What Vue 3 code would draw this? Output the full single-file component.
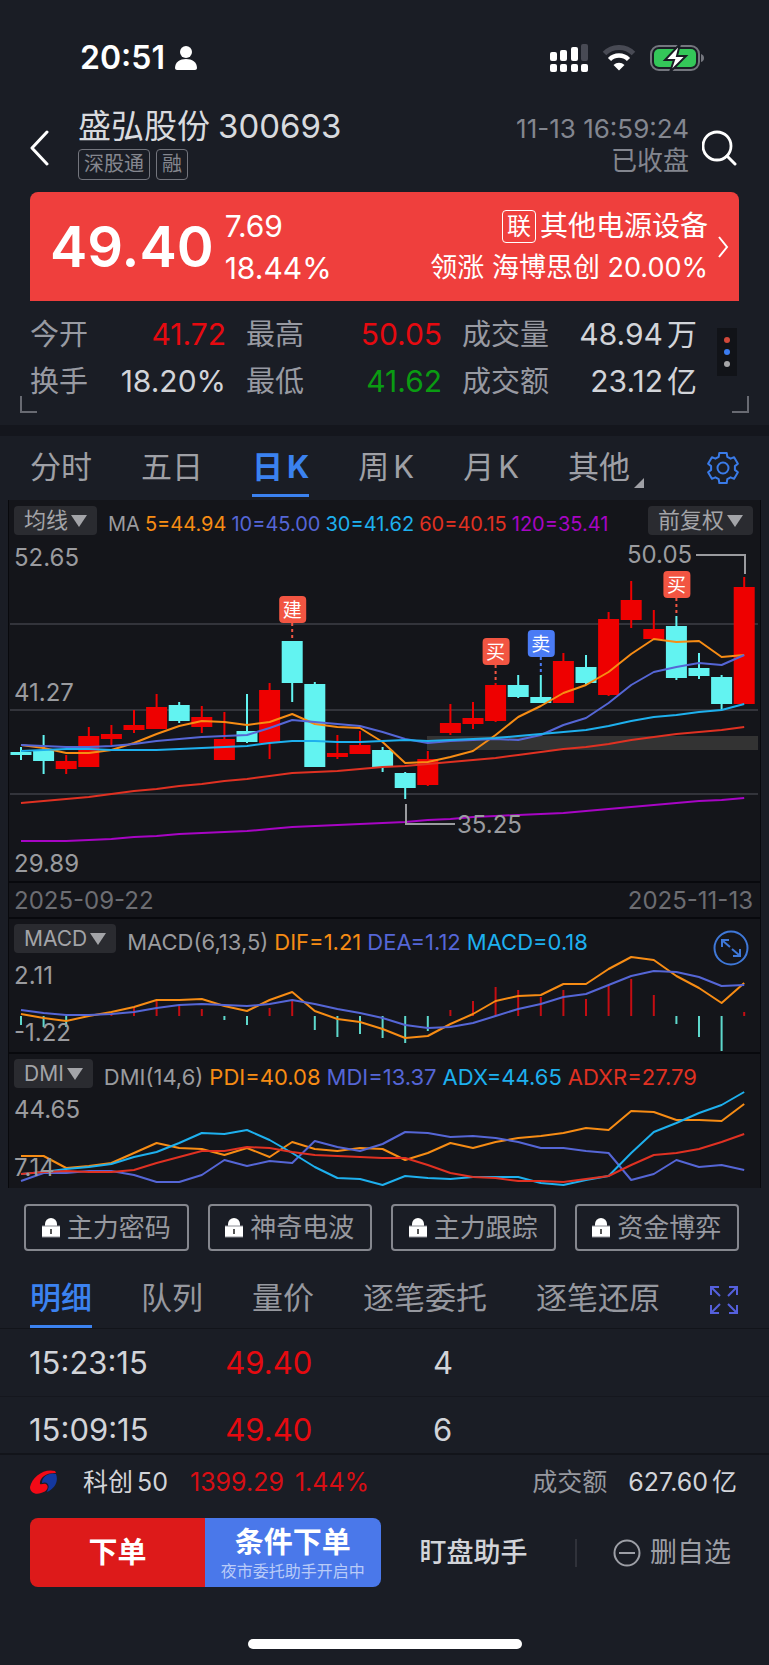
<script setup>
import { ref } from 'vue'

const stats = [
  { label: '今开', value: '41.72', tone: 'up' },
  { label: '最高', value: '50.05', tone: 'up' },
  { label: '成交量', value: '48.94', unit: '万' },
  { label: '换手', value: '18.20%' },
  { label: '最低', value: '41.62', tone: 'down' },
  { label: '成交额', value: '23.12', unit: '亿' }
]

const periods = [
  { id: 'min', text: '分时' },
  { id: 'five', text: '五日' },
  { id: 'day', text: '日', latin: 'K' },
  { id: 'week', text: '周', latin: 'K' },
  { id: 'month', text: '月', latin: 'K' },
  { id: 'other', text: '其他', more: true }
]
const period = ref('day')

const maLegend = [
  { text: 'MA', tone: 'plain' },
  { text: '5=44.94', tone: 'orange' },
  { text: '10=45.00', tone: 'indigo' },
  { text: '30=41.62', tone: 'cyan' },
  { text: '60=40.15', tone: 'red' },
  { text: '120=35.41', tone: 'purple' }
]
const macdLegend = [
  { text: 'MACD(6,13,5)', tone: 'plain' },
  { text: 'DIF=1.21', tone: 'orange' },
  { text: 'DEA=1.12', tone: 'indigo' },
  { text: 'MACD=0.18', tone: 'cyan' }
]
const dmiLegend = [
  { text: 'DMI(14,6)', tone: 'plain' },
  { text: 'PDI=40.08', tone: 'orange' },
  { text: 'MDI=13.37', tone: 'indigo' },
  { text: 'ADX=44.65', tone: 'cyan' },
  { text: 'ADXR=27.79', tone: 'red' }
]

// one trading day per 22.6 chart units
const dayX = (i) => 12 + i * 22.6

const toPoints = (ys) => ys.map((y, i) => `${dayX(i).toFixed(1)},${y}`).join(' ')

// wick top, body top, body bottom, wick bottom, rising
const candles = [
  [207, 212, 215, 220, 0], [195, 210, 221, 234, 0], [215, 221, 229, 234, 1],
  [187, 196, 227, 227, 1], [185, 194, 199, 205, 1], [170, 185, 190, 193, 1],
  [154, 167, 189, 189, 1], [162, 165, 181, 183, 0], [166, 177, 187, 193, 1],
  [172, 199, 220, 220, 1], [154, 191, 202, 203, 0], [143, 150, 203, 219, 1],
  [101, 101, 143, 162, 0], [142, 144, 227, 227, 0], [195, 213, 217, 219, 1],
  [191, 205, 214, 214, 1], [207, 210, 227, 232, 0], [232, 233, 248, 259, 0],
  [211, 219, 245, 246, 1], [164, 183, 193, 195, 1], [162, 178, 184, 189, 1],
  [143, 145, 181, 182, 1], [135, 145, 157, 158, 0], [135, 157, 163, 163, 0],
  [113, 121, 163, 163, 1], [115, 127, 143, 145, 0], [72, 79, 155, 156, 1],
  [41, 60, 80, 88, 1], [70, 89, 99, 99, 1], [76, 86, 138, 140, 0],
  [113, 128, 136, 139, 0], [135, 137, 164, 170, 0], [37, 47, 164, 164, 1]
]

const maLines = [
  {
    tone: 'purple',
    ys: [301, 301, 301, 300, 299, 297, 296, 294, 293, 292, 291, 289, 287, 286, 285, 284, 283, 282, 280, 279, 277, 276, 275, 274, 273, 271, 269, 267, 265, 263, 261, 260, 258]
  },
  {
    tone: 'orange',
    ys: [205, 208, 213, 213, 210, 203, 194, 186, 181, 182, 185, 182, 174, 184, 187, 188, 202, 223, 222, 217, 211, 195, 177, 166, 153, 145, 132, 114, 99, 102, 101, 117, 115]
  },
  {
    tone: 'indigo',
    ys: [205, 206, 207, 207, 206, 204, 201, 199, 197, 196, 195, 188, 180, 182, 184, 186, 192, 199, 203, 201, 200, 199, 200, 195, 185, 178, 163, 145, 132, 127, 123, 125, 115]
  },
  {
    tone: 'cyan',
    ys: [211, 210, 209, 209, 210, 210, 210, 209, 208, 207, 206, 203, 201, 201, 202, 202, 201, 200, 201, 200, 199, 198, 196, 194, 192, 190, 186, 181, 177, 175, 172, 170, 164]
  },
  {
    tone: 'red',
    ys: [263, 261, 259, 257, 254, 251, 249, 246, 244, 241, 239, 236, 233, 232, 231, 229, 227, 226, 224, 222, 220, 218, 215, 212, 209, 207, 204, 200, 197, 194, 192, 190, 187]
  }
]

const trades = [
  { day: 12, y: 56, end: 99, text: '建', kind: 'buy' },
  { day: 21, y: 98, end: 143, text: '买', kind: 'buy' },
  { day: 23, y: 90, end: 134, text: '卖', kind: 'sell' },
  { day: 29, y: 31, end: 75, text: '买', kind: 'buy' }
]

const macdZero = 99
const macdBars = [108, 110, 110, 99, 97, 90, 84, 89, 92, 103, 108, 91, 84, 113, 120, 117, 121, 126, 114, 93, 84, 70, 73, 80, 73, 82, 68, 62, 78, 107, 120, 134, 95]
const macdLines = [
  {
    tone: 'orange',
    ys: [97, 101, 104, 99, 95, 90, 83, 83, 82, 89, 94, 83, 75, 94, 102, 105, 112, 121, 119, 107, 97, 84, 79, 78, 67, 67, 52, 40, 43, 59, 71, 86, 66]
  },
  {
    tone: 'indigo',
    ys: [93, 96, 98, 98, 97, 95, 91, 88, 87, 88, 89, 87, 83, 87, 92, 96, 101, 108, 111, 110, 106, 99, 92, 87, 80, 77, 68, 59, 54, 55, 60, 69, 68]
  }
]

const dmiLines = [
  {
    tone: 'orange',
    ys: [104, 104, 116, 114, 111, 101, 91, 96, 97, 103, 96, 105, 90, 97, 99, 96, 97, 108, 101, 91, 96, 90, 86, 84, 81, 76, 78, 59, 60, 68, 68, 69, 52]
  },
  {
    tone: 'indigo',
    ys: [129, 121, 121, 119, 119, 123, 130, 130, 123, 108, 114, 109, 111, 89, 95, 99, 92, 80, 81, 85, 84, 86, 90, 96, 96, 99, 101, 128, 122, 108, 115, 113, 118]
  },
  {
    tone: 'cyan',
    ys: [122, 120, 117, 115, 112, 105, 100, 91, 81, 82, 78, 88, 101, 115, 126, 127, 133, 124, 126, 127, 125, 125, 125, 131, 133, 128, 124, 101, 80, 71, 61, 53, 40]
  },
  {
    tone: 'red',
    ys: [122, 120, 119, 120, 120, 118, 111, 105, 99, 99, 95, 96, 100, 103, 104, 105, 106, 106, 113, 121, 125, 126, 129, 129, 130, 127, 124, 113, 103, 101, 97, 90, 82]
  }
]

const locked = ['主力密码', '神奇电波', '主力跟踪', '资金博弈']

const detailTabs = ['明细', '队列', '量价', '逐笔委托', '逐笔还原']
const detailTab = ref('明细')

const ticks = [
  { time: '15:23:15', price: '49.40', qty: 4 },
  { time: '15:09:15', price: '49.40', qty: 6 }
]

// six-toothed outline for the settings button
const gear = (() => {
  const at = (deg, r) => {
    const a = (deg * Math.PI) / 180
    return `${(17 + r * Math.cos(a)).toFixed(1)} ${(17 + r * Math.sin(a)).toFixed(1)}`
  }
  const points = []
  for (let t = -90; t < 270; t += 60) {
    points.push(at(t - 21, 12), at(t - 14, 15.5), at(t + 14, 15.5), at(t + 21, 12))
  }
  return `M${points.join('L')}Z`
})()
</script>

<template>
  <div class="page">
    <div class="status">
      <span class="clock">20:51</span>
      <svg class="person" viewBox="0 0 24 24" width="24" height="24">
        <circle cx="12" cy="6" r="6" fill="#fff" />
        <path d="M1 22c0-6 5-9 11-9s11 3 11 9c0 1-1 2-2 2H3c-1 0-2-1-2-2z" fill="#fff" />
      </svg>
      <div class="status-icons">
        <svg viewBox="0 0 38 28" width="38" height="28" fill="#fff">
          <rect x="0" y="8" width="7" height="9" rx="2" />
          <rect x="10" y="6" width="7" height="11" rx="2" />
          <rect x="21" y="3" width="7" height="14" rx="2" />
          <rect x="31" y="0" width="7" height="17" rx="2" fill="#484a54" />
          <rect x="0" y="20" width="7" height="8" rx="2" />
          <rect x="10" y="20" width="7" height="8" rx="2" />
          <rect x="21" y="20" width="7" height="8" rx="2" />
          <rect x="31" y="20" width="7" height="8" rx="2" />
        </svg>
        <svg viewBox="0 0 34 26" width="34" height="26" fill="none">
          <path d="M2.500 8.500a20.500 20.500 0 0 1 29 0" stroke="#484a54" stroke-width="5" />
          <path d="M7.500 14.500a13.500 13.500 0 0 1 19 0" stroke="#fff" stroke-width="4.500" />
          <path d="M11.500 20a8 8 0 0 1 11 0L17 25.500z" fill="#fff" />
        </svg>
        <svg viewBox="0 0 54 28" width="54" height="28">
          <rect x="1" y="2" width="48" height="24" rx="8" fill="none" stroke="#74767e" stroke-width="2" />
          <path d="M51 10q3 1 3 4t-3 4z" fill="#74767e" />
          <rect x="4" y="5" width="42" height="18" rx="5" fill="#34c759" />
          <path d="M30 0L15 16h9l-4 12 16-16h-9z" fill="#fff" stroke="#1a1d25" stroke-width="2" />
        </svg>
      </div>
    </div>

    <header class="header">
      <button class="icon-btn" aria-label="返回">
        <svg viewBox="0 0 20 36" width="20" height="36">
          <path d="M18 2L3 18l15 16" fill="none" stroke="#fff" stroke-width="3" stroke-linecap="round" stroke-linejoin="round" />
        </svg>
      </button>
      <div class="name-box">
        <h1 class="name"><span>盛弘股份</span> <span>300693</span></h1>
        <div class="tags">
          <span class="tag">深股通</span>
          <span class="tag">融</span>
        </div>
      </div>
      <div class="market-time">
        <div>11-13 16:59:24</div>
        <div>已收盘</div>
      </div>
      <button class="icon-btn" aria-label="搜索">
        <svg viewBox="0 0 38 36" width="38" height="36">
          <circle cx="15" cy="16" r="14" fill="none" stroke="#fff" stroke-width="2.800" />
          <path d="M25 26l8 8" stroke="#fff" stroke-width="3" stroke-linecap="round" />
        </svg>
      </button>
    </header>

    <section class="quote">
      <strong class="price">49.40</strong>
      <div class="change">
        <div>7.69</div>
        <div>18.44%</div>
      </div>
      <a class="sector" href="#">
        <span class="sector-text">
          <span class="sector-line sector-name"><span class="badge">联</span>其他电源设备</span>
          <span class="sector-line">领涨 海博思创 20.00%</span>
        </span>
        <svg viewBox="0 0 11 22" width="11" height="22">
          <path d="M1 1l8 10-8 10" fill="none" stroke="#fff" stroke-width="2" />
        </svg>
      </a>
    </section>

    <section class="stats">
      <dl class="stats-grid">
        <div v-for="item in stats" :key="item.label" class="stat">
          <dt>{{ item.label }}</dt>
          <dd :class="item.tone">
            {{ item.value }}<span v-if="item.unit" class="unit">{{ item.unit }}</span>
          </dd>
        </div>
      </dl>
      <button class="dots" aria-label="更多">
        <i class="dot dot-red"></i>
        <i class="dot dot-blue"></i>
        <i class="dot"></i>
      </button>
    </section>

    <nav class="periods">
      <button
        v-for="item in periods"
        :key="item.id"
        class="period"
        :class="{ active: period === item.id }"
        @click="period = item.id"
      >
        <span>{{ item.text }}</span><span v-if="item.latin">{{ item.latin }}</span>
        <svg v-if="item.more" class="corner" viewBox="0 0 10 10" width="10" height="10">
          <path d="M10 0v10H0z" fill="#9fa0a6" />
        </svg>
      </button>
      <button class="icon-btn gear" aria-label="设置">
        <svg viewBox="0 0 34 34" width="34" height="34" fill="none" stroke="#3a7be8" stroke-width="2" stroke-linejoin="round">
          <path :d="gear" />
          <circle cx="17" cy="17" r="5.500" />
        </svg>
      </button>
    </nav>

    <section class="chart">
      <div class="chart-head main-head">
        <button class="pick">均线<i class="caret"></i></button>
        <div class="legend ma-legend">
          <span v-for="item in maLegend" :key="item.text" :class="item.tone">{{ item.text }}</span>
        </div>
        <button class="pick pick-right">前复权<i class="caret"></i></button>
      </div>

      <svg class="plot" viewBox="0 0 751 341">
        <path class="grid" d="M1 84h748M1 170h748M1 254h748" />
        <rect x="418" y="196" width="331" height="14" fill="#333333" />
        <g v-for="(c, i) in candles" :key="i" :class="c[4] ? 'rise' : 'fall'">
          <rect :x="dayX(i) - 1" :y="c[0]" width="2" :height="c[3] - c[0]" />
          <rect :x="dayX(i) - 10.5" :y="c[1]" width="21" :height="c[2] - c[1]" />
        </g>
        <polyline
          v-for="line in maLines"
          :key="line.tone"
          class="curve"
          :class="line.tone"
          :points="toPoints(line.ys)"
        />
        <path class="callout" d="M687 15h49v19M397 264v20h49" />
        <g v-for="mark in trades" :key="mark.day" :class="mark.kind">
          <path class="mark-stem" :d="`M${dayX(mark.day)} ${mark.y + 27}V${mark.end}`" />
          <rect class="mark-box" :x="dayX(mark.day) - 13" :y="mark.y" width="27" height="27" rx="4" />
          <text class="mark-text" :x="dayX(mark.day)" :y="mark.y + 21">{{ mark.text }}</text>
        </g>
        <text class="axis" x="5" y="26">52.65</text>
        <text class="axis" x="5" y="161">41.27</text>
        <text class="axis" x="5" y="332">29.89</text>
        <text class="axis" x="618" y="23">50.05</text>
        <text class="axis" x="448" y="293">35.25</text>
      </svg>

      <div class="dates">
        <span>2025-09-22</span>
        <span>2025-11-13</span>
      </div>

      <div class="sub">
        <svg class="plot" viewBox="0 2 751 133">
          <rect
            v-for="(y, i) in macdBars"
            :key="i"
            :class="y < macdZero ? 'bar-rise' : 'bar-fall'"
            :x="dayX(i) - 1"
            :y="Math.min(y, macdZero)"
            width="2"
            :height="Math.abs(y - macdZero)"
          />
          <polyline
            v-for="line in macdLines"
            :key="line.tone"
            class="curve"
            :class="line.tone"
            :points="toPoints(line.ys)"
          />
          <text class="axis" x="5" y="67">2.11</text>
          <text class="axis" x="5" y="124">-1.22</text>
        </svg>
        <div class="chart-head">
          <button class="pick pick-latin">MACD<i class="caret"></i></button>
          <div class="legend">
            <span v-for="item in macdLegend" :key="item.text" :class="item.tone">{{ item.text }}</span>
          </div>
          <button class="icon-btn expand" aria-label="放大">
            <svg viewBox="0 0 36 36" width="36" height="36" fill="none" stroke="#3f78d8" stroke-width="2">
              <circle cx="18" cy="18" r="16.500" />
              <path d="M9 17V10h7M10 11l7 6M19 19l7 6M27 19v7h-7" />
            </svg>
          </button>
        </div>
      </div>

      <div class="sub">
        <svg class="plot" viewBox="0 2 751 134">
          <polyline
            v-for="line in dmiLines"
            :key="line.tone"
            class="curve"
            :class="line.tone"
            :points="toPoints(line.ys)"
          />
          <text class="axis" x="5" y="66">44.65</text>
          <text class="axis" x="5" y="124">7.14</text>
        </svg>
        <div class="chart-head">
          <button class="pick pick-latin">DMI<i class="caret"></i></button>
          <div class="legend">
            <span v-for="item in dmiLegend" :key="item.text" :class="item.tone">{{ item.text }}</span>
          </div>
        </div>
      </div>
    </section>

    <div class="locks">
      <button v-for="item in locked" :key="item" class="lock">
        <svg viewBox="0 0 18 22" width="18" height="22">
          <path d="M3 9V7a6 6 0 0 1 12 0v2z" fill="#fff" />
          <path d="M0 9h18v11H0z" fill="#fff" />
          <path d="M0 9h18M0 20h18" stroke="#8b8d94" stroke-width="1" />
          <path d="M9 12v5" stroke="#555" stroke-width="2" />
        </svg>
        {{ item }}
      </button>
    </div>

    <nav class="details">
      <button
        v-for="item in detailTabs"
        :key="item"
        class="detail"
        :class="{ active: detailTab === item }"
        @click="detailTab = item"
      >
        {{ item }}
      </button>
      <button class="icon-btn full" aria-label="全屏">
        <svg viewBox="0 0 28 28" width="28" height="28" fill="none" stroke="#5560dd" stroke-width="2">
          <path d="M1 9V1h8M2 2l8 8M19 1h8v8M26 2l-8 8M1 19v8h8M2 26l8-8M27 19v8h-8M26 26l-8-8" />
        </svg>
      </button>
    </nav>

    <div class="ticks">
      <table>
        <tbody>
          <tr v-for="item in ticks" :key="item.time">
            <td class="tick-time">{{ item.time }}</td>
            <td class="tick-price">{{ item.price }}</td>
            <td class="tick-qty">{{ item.qty }}</td>
          </tr>
        </tbody>
      </table>
    </div>

    <div class="index-bar">
      <svg class="index-logo" viewBox="0 0 28 25" width="28" height="25">
        <path d="M26 4C20 2 12 6 12 13c5-2 8 2 6 6l-1 3c7-3 12-10 9-18z" fill="#1438a0" />
        <path d="M25 1C14-2 2 7 0 17c0 6 6 8 11 6 5-1 8-5 6-8-2-3-5 0-7-1C9 8 17 2 26 3z" fill="#f30a17" />
      </svg>
      <span class="index-name">科创<span class="unit">50</span></span>
      <span class="index-value">1399.29</span>
      <span class="index-value">1.44%</span>
      <span class="turnover-label">成交额</span>
      <span>627.60<span class="unit">亿</span></span>
    </div>

    <footer class="actions">
      <div class="order">
        <button class="order-btn order-now">下单</button>
        <button class="order-btn order-cond">
          <span>条件下单</span>
          <small>夜市委托助手开启中</small>
        </button>
      </div>
      <button class="plain-btn watch">盯盘助手</button>
      <button class="plain-btn remove">
        <svg viewBox="0 0 28 28" width="28" height="28" fill="none" stroke="#9d9fa6" stroke-width="2">
          <circle cx="14" cy="14" r="12.500" />
          <path d="M6 14h16" />
        </svg>
        删自选
      </button>
    </footer>

    <div class="home-bar"></div>
  </div>
</template>

<style>
body {
  margin: 0;
  background: #1a1d25;
}
</style>

<style scoped>
.page {
  background: #1a1d25;
  color: #d2d4d9;
  font-family: Inter, "Noto Sans CJK SC", sans-serif;
  overflow: hidden;
}

svg {
  display: block;
}

button {
  padding: 0;
  border: 0;
  background: none;
  color: inherit;
  font: inherit;
  white-space: nowrap;
  cursor: pointer;
}

.icon-btn {
  flex: none;
}

.unit {
  margin-left: 4px;
}

.status {
  display: flex;
  align-items: center;
  padding: 38px 65px 0 80px;
  color: #fff;
}

.clock {
  font-size: 32px;
  font-weight: 600;
  line-height: 40px;
}

.person {
  margin-left: 9px;
}

.status-icons {
  display: flex;
  align-items: center;
  gap: 14px;
  margin-left: auto;
}

.header {
  display: flex;
  align-items: center;
  padding: 26px 29px 12px;
}

.header .icon-btn {
  margin-top: 12px;
}

.name-box {
  margin-left: 29px;
}

.name {
  display: flex;
  gap: 8px;
  margin: 0;
  font-size: 33px;
  font-weight: 400;
  line-height: 45px;
  color: #d8dade;
}

.tags {
  display: flex;
  gap: 6px;
}

.tag {
  padding: 0 5px;
  border: 1px solid #73757d;
  border-radius: 4px;
  font-size: 20px;
  line-height: 29px;
  color: #85878f;
}

.market-time {
  margin: 6px 13px 0 auto;
  font-size: 26px;
  line-height: 32px;
  text-align: right;
  color: #83868f;
}

.quote {
  display: flex;
  align-items: center;
  margin: 0 30px;
  padding: 13px 10px 12px 20px;
  border-radius: 8px 8px 0 0;
  background: #ef3f3d;
  color: #fff;
}

.price {
  font-size: 56px;
  font-weight: 600;
  line-height: 60px;
}

.change {
  margin-left: 11px;
  font-size: 30px;
  line-height: 42px;
}

.sector {
  display: flex;
  align-items: center;
  gap: 10px;
  margin-left: auto;
  color: inherit;
  text-decoration: none;
}

.sector-text {
  font-size: 27px;
  line-height: 42px;
  text-align: right;
}

.sector-line {
  display: flex;
  align-items: center;
  justify-content: flex-end;
}

.sector-name {
  font-size: 28px;
}

.badge {
  width: 32px;
  margin-right: 4px;
  border: 1px solid #fff;
  border-radius: 4px;
  font-size: 24px;
  line-height: 31px;
  text-align: center;
}

.stats {
  position: relative;
  display: flex;
  gap: 20px;
  padding: 10px 32px 20px 30px;
}

.stats::before,
.stats::after {
  content: "";
  position: absolute;
  bottom: 12px;
  width: 15px;
  height: 15px;
  border: 0 solid #686a72;
}

.stats::before {
  left: 20px;
  border-width: 0 0 2px 2px;
}

.stats::after {
  right: 20px;
  border-width: 0 2px 2px 0;
}

.stats-grid {
  flex: 1;
  display: grid;
  grid-template-columns: 197fr 197fr 236fr;
  column-gap: 20px;
  margin: 0;
  font-size: 29px;
  line-height: 47px;
}

.stat {
  display: flex;
  justify-content: space-between;
}

.stat dt {
  color: #989aa2;
}

.stat dd {
  margin: 0;
  font-size: 30px;
}

.stat .up {
  color: #e60a10;
}

.stat .down {
  color: #0a9b12;
}

.dots {
  align-self: center;
  display: flex;
  flex-direction: column;
  align-items: center;
  gap: 6px;
  margin-bottom: 12px;
  padding: 9px 7px;
  background: #111318;
}

.dot {
  width: 6px;
  height: 6px;
  border-radius: 50%;
  background: #a6a6a8;
}

.dot-red {
  background: #d0483a;
}

.dot-blue {
  background: #3b7cf0;
}

.periods {
  display: flex;
  align-items: center;
  gap: 49px;
  padding: 3px 29px 3px 30px;
  border-top: 11px solid #14161d;
  font-size: 31px;
  color: #9fa0a6;
}

.period {
  display: flex;
  gap: 4px;
  border-bottom: 3px solid transparent;
  line-height: 55px;
}

.corner {
  align-self: flex-end;
  margin-bottom: 6px;
}

.period.active {
  border-color: #3b82f0;
  color: #3b82f0;
  font-weight: 700;
}

.gear {
  margin-left: auto;
}

.chart {
  margin: 0 8px;
  border: 0 solid #08090d;
  border-width: 0 1px;
  background: #14151a;
}

.chart-head {
  display: flex;
  align-items: flex-start;
  padding: 5px;
}

.main-head {
  padding: 6px 7px 5px 5px;
}

.pick {
  flex: none;
  display: flex;
  align-items: center;
  gap: 3px;
  padding: 0 10px;
  border-radius: 4px;
  background: #2a2b30;
  font-size: 22px;
  line-height: 29px;
  color: #a3a4a8;
}

.pick-latin {
  font-size: 21px;
}

.pick-right {
  margin-left: auto;
}

.caret {
  border: 8px solid transparent;
  border-top: 12px solid #a3a4a8;
  border-bottom: 0;
}

.legend {
  display: flex;
  gap: 6px;
  margin-left: 11px;
  padding-top: 8px;
  font-size: 22px;
  line-height: 20px;
  white-space: nowrap;
}

.ma-legend {
  gap: 5px;
  font-size: 20px;
}

.plot {
  width: 100%;
  height: auto;
}

.grid {
  stroke: #33343b;
  stroke-width: 2;
}

.rise {
  fill: #ee0000;
}

.fall {
  fill: #62f3f1;
}

.bar-rise {
  fill: #c40d12;
}

.bar-fall {
  fill: #5ed8cc;
}

.curve {
  fill: none;
  stroke: currentColor;
  stroke-width: 2;
  stroke-linejoin: round;
}

.plain {
  color: #9a9b9f;
}

.orange {
  color: #f78c14;
}

.indigo {
  color: #5566d6;
}

.cyan {
  color: #1eb0ee;
}

.red {
  color: #e03122;
}

.purple {
  color: #a705c4;
}

.axis {
  fill: #9a9b9f;
  font-size: 24px;
}

.callout {
  fill: none;
  stroke: #9a9b9f;
  stroke-width: 2;
}

.buy {
  color: #f25542;
}

.sell {
  color: #4a7bf5;
}

.mark-box {
  fill: currentColor;
}

.mark-stem {
  stroke: currentColor;
  stroke-width: 2;
  stroke-dasharray: 3 3;
}

.mark-text {
  fill: #fff;
  font-size: 19px;
  text-anchor: middle;
}

.dates {
  display: flex;
  justify-content: space-between;
  padding: 2px 7px 0 5px;
  border-top: 2px solid #08090d;
  font-size: 24px;
  line-height: 32px;
  color: #6c6d72;
}

.sub {
  display: grid;
  border-top: 2px solid #08090d;
}

.sub > * {
  grid-area: 1 / 1;
}

.expand {
  margin: 6px 6px 0 auto;
}

.locks {
  display: grid;
  grid-template-columns: repeat(4, 1fr);
  gap: 19px;
  padding: 16px 30px 0 24px;
}

.lock {
  display: flex;
  align-items: center;
  justify-content: center;
  gap: 7px;
  border: 2px solid #85878e;
  border-radius: 4px;
  font-size: 26px;
  line-height: 43px;
  color: #96989f;
}

.details {
  display: flex;
  align-items: center;
  gap: 49px;
  padding: 20px 31px 0 30px;
  border-bottom: 1px solid #12141a;
  font-size: 31px;
  color: #96989f;
}

.detail {
  border-bottom: 3px solid transparent;
  line-height: 54px;
}

.detail.active {
  border-color: #3b82f0;
  color: #3b82f0;
  font-weight: 500;
}

.full {
  margin-left: auto;
}

.ticks {
  height: 124px;
  overflow: hidden;
}

.ticks table {
  width: 100%;
  border-collapse: collapse;
  table-layout: fixed;
  font-size: 31px;
  line-height: 66px;
}

.ticks td {
  padding: 1px 0 0;
}

.ticks tr + tr td {
  padding: 0;
  border-top: 1px solid #15171e;
}

.ticks .tick-time {
  width: 25%;
  padding-left: 29px;
}

.ticks .tick-price {
  width: 27%;
  padding-left: 4px;
  color: #e60a10;
}

.index-bar {
  display: flex;
  align-items: center;
  padding: 0 32px 0 30px;
  border-top: 2px solid #12141a;
  font-size: 25px;
  line-height: 54px;
}

.index-name {
  margin: 0 11px 0 25px;
}

.index-value {
  margin-left: 11px;
  color: #d80e14;
}

.turnover-label {
  margin: 0 21px 0 auto;
  color: #96989f;
}

.actions {
  display: flex;
  align-items: center;
  padding: 9px 38px 0 30px;
}

.order {
  flex: none;
  display: flex;
  width: 50%;
  max-width: 352px;
  border-radius: 8px;
  overflow: hidden;
  color: #fff;
}

.order-btn {
  flex: 1;
  display: flex;
  flex-direction: column;
  align-items: center;
  justify-content: center;
  padding: 6px 0;
  font-size: 29px;
  font-weight: 700;
  line-height: 38px;
}

.order-now {
  background: #dd1a1a;
}

.order-cond {
  background: #4a78ea;
}

.order-cond small {
  font-size: 16px;
  font-weight: 400;
  line-height: 19px;
  color: #b9cbf8;
}

.plain-btn {
  font-size: 27px;
  line-height: 28px;
}

.watch {
  flex: 1;
  margin-left: 39px;
  border-right: 2px solid #30323a;
  text-align: left;
  font-weight: 500;
}

.remove {
  display: flex;
  align-items: center;
  gap: 9px;
  margin-left: 36px;
  color: #9d9fa6;
}

.home-bar {
  width: 274px;
  height: 10px;
  margin: 52px auto 16px;
  border-radius: 5px;
  background: #fff;
}
</style>
